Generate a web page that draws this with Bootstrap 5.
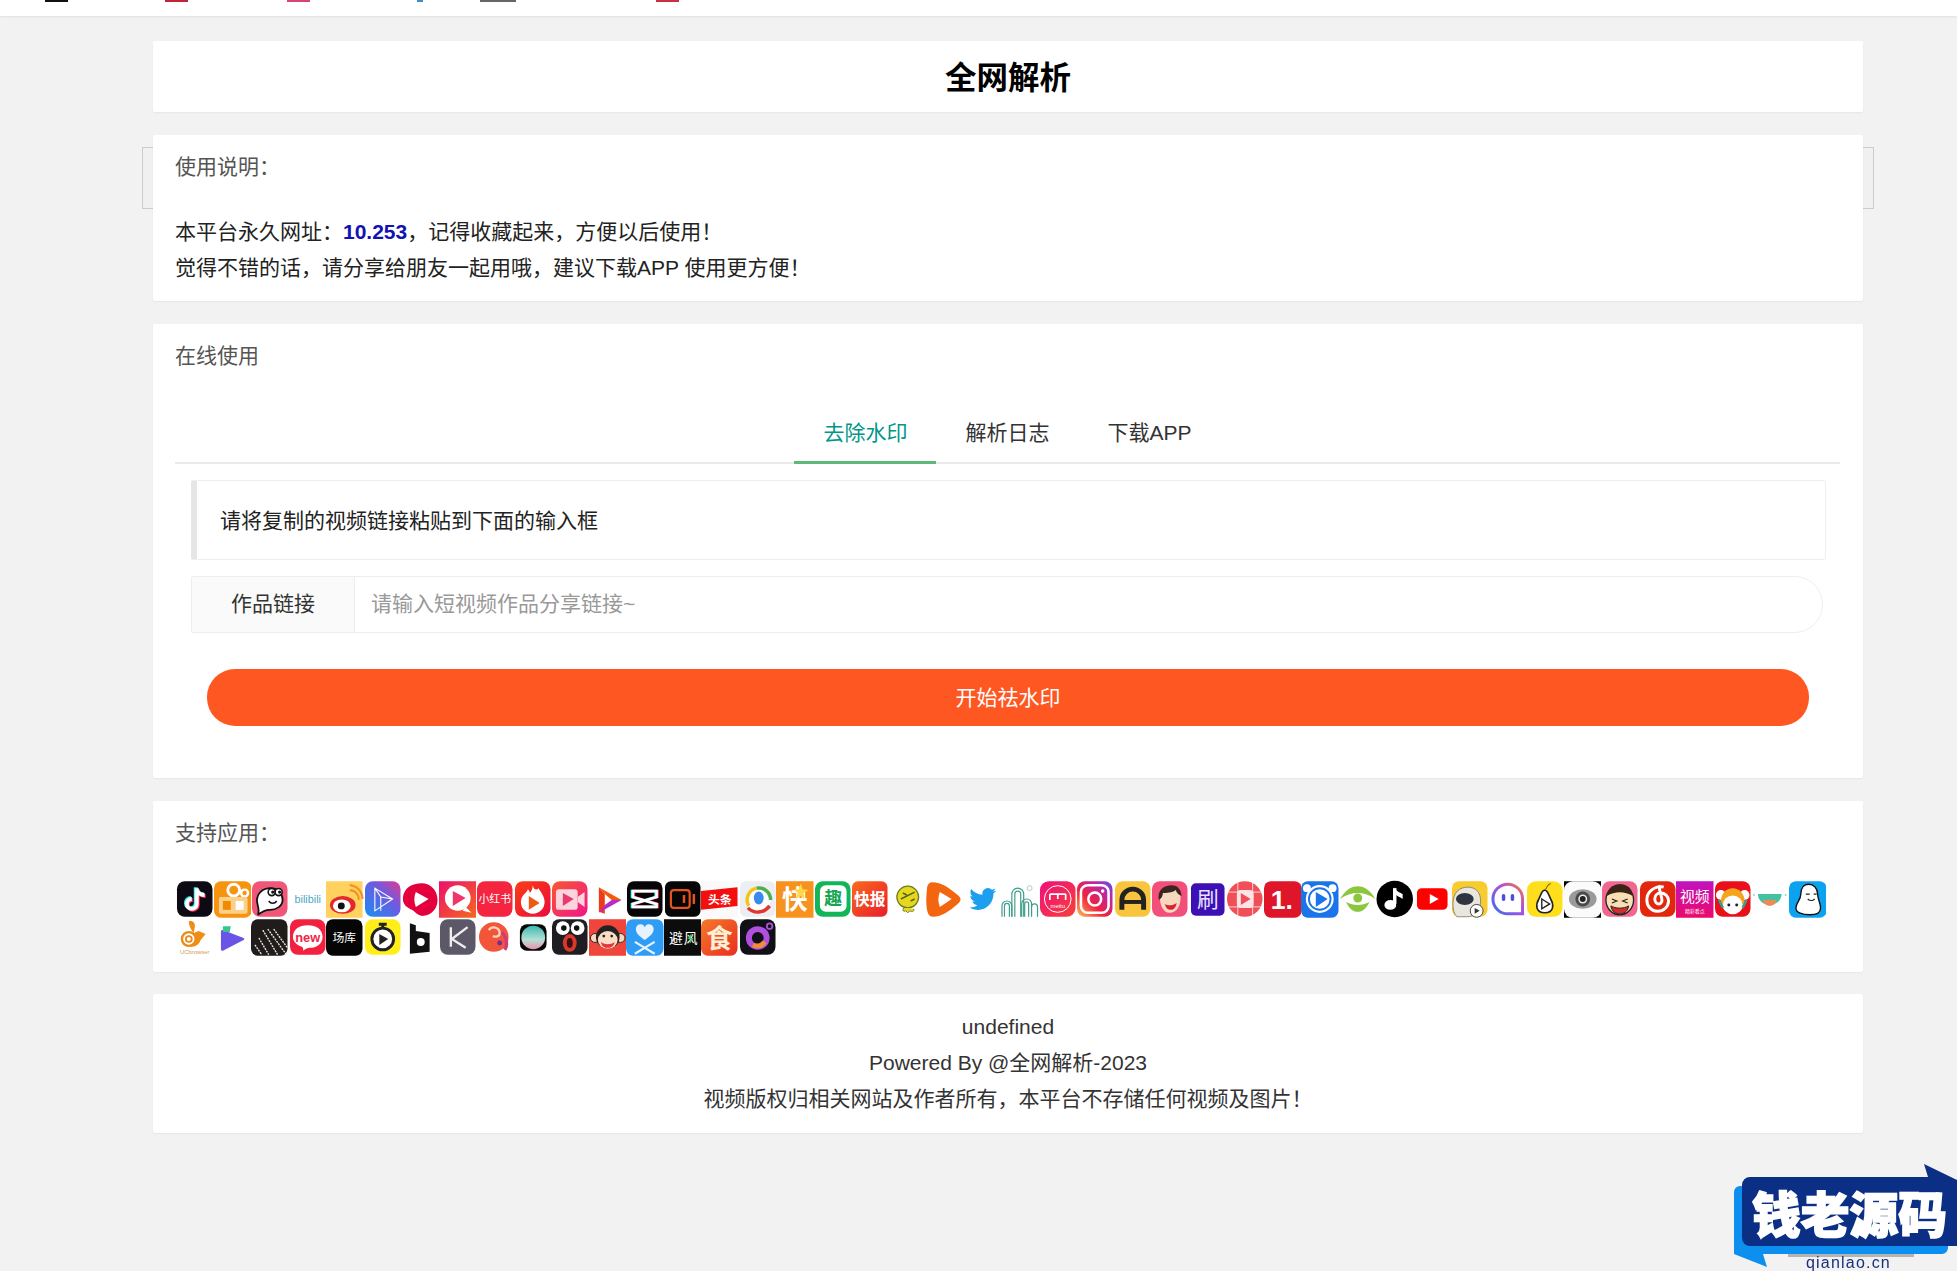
<!DOCTYPE html>
<html lang="zh-CN">
<head>
    <meta charset="UTF-8">
    <meta name="viewport" content="width=device-width, initial-scale=1.0">
    <title>全网解析</title>
    <link href="https://cdn.jsdelivr.net/npm/bootstrap@5.3.3/dist/css/bootstrap.min.css" rel="stylesheet">
    <style>
        body {
            background: #f2f2f2;
            color: #333;
            font-family: "Liberation Sans", "Noto Sans CJK SC", sans-serif;
            font-size: 21px;
            line-height: 36px;
        }
        .top-strip { height: 16px; background: #fff; box-shadow: 0 1px 2px rgba(0,0,0,.08); }
        .top-bit { height: 2px; width: 23px; }
        .bit-a { margin-left: 45px; background: #111; }
        .bit-b { margin-left: 97px; background: #c3233a; }
        .bit-c { margin-left: 99px; background: #d8447a; }
        .bit-d { margin-left: 107px; width: 6px; background: #3d8fd0; }
        .bit-e { margin-left: 57px; width: 36px; background: #666; }
        .bit-f { margin-left: 140px; background: #c8323f; }
        .page-wrap { width: 1710px; margin: 25px 0 0 153px; }
        .sheet { background: #fff; border: 0; border-radius: 2px; box-shadow: 0 1px 2px rgba(0,0,0,.05); margin-bottom: 23px; }
        .sheet-title { height: 71px; line-height: 75px; font-size: 31.5px; font-weight: 700; color: #000; text-align: center; }
        .sheet-head { height: 62px; line-height: 64px; padding: 0 22px; color: #555; }
        .sheet-body { padding: 17px 22px 15px; color: #222; }
        .ghost-box { position: absolute; left: -11px; right: -11px; top: 12px; height: 62px; background: #f0f0f0; border: 1px solid #ccc; z-index: 0; }
        .over-ghost { position: relative; z-index: 1; }
        .site-num { color: #1212b4; font-weight: 700; }
        .tab-area { padding: 16px 23px 0 22px; }
        .tab-row { border-bottom: 2px solid #eaeaea; height: 62px; }
        .tab-row .nav-link { color: #333; padding: 0 29px; height: 62px; line-height: 62px; font-size: 21px; border: 0; border-radius: 0; }
        .tab-row .nav-link.active { color: #009688; border-bottom: 3px solid #5fb878; }
        .tip-box { height: 80px; line-height: 80px; margin: 16px 14px 16px 16px; padding-left: 23px; border: 1px solid #eee; border-left: 6px solid #e6e6e6; border-radius: 2px; color: #222; }
        .link-group { margin: 0 0 36px 16px; width: 1632px; height: 57px; }
        .link-group .input-group-text { width: 164px; justify-content: center; background: #fafafa; border: 1px solid #eee; border-radius: 2px 0 0 2px; color: #333; font-size: 21px; padding-bottom: 8px; }
        .link-group .form-control { border: 1px solid #eee; border-radius: 0 29px 29px 0 !important; padding: 0 0 2px 16px; font-size: 21px; color: #333; box-shadow: none; }
        .link-group .form-control::placeholder { color: #999; }
        .go-btn { display: block; margin: 0 0 52px 32px; width: 1602px; height: 57px; border: 0; border-radius: 28px; background: #ff5722; color: #fff; font-size: 21px; line-height: 57px; padding: 0; }
        .go-btn:hover { background: #ff5722; color: #fff; }
        .app-grid { margin-top: 17px; padding: 0 22px 16px 23px; }
        .app-ico { width: 37.5px; height: 38px; flex: none; }
        .app-ico text { font-family: "Noto Sans CJK SC", "Liberation Sans", sans-serif; text-anchor: middle; }
        .foot-sheet { padding: 15px 0 16px; text-align: center; color: #333; margin-top: -1px; }
        .corner-mark { width: 257px; height: 131px; }
        .corner-mark text { font-family: "Noto Sans CJK SC", "Liberation Sans", sans-serif; }
    </style>
</head>
<body>
    <div class="top-strip d-flex">
        <div class="top-bit bit-a"></div><div class="top-bit bit-b"></div><div class="top-bit bit-c"></div>
        <div class="top-bit bit-d"></div><div class="top-bit bit-e"></div><div class="top-bit bit-f"></div>
    </div>

    <div class="page-wrap">
        <div class="card sheet sheet-title">全网解析</div>

        <div class="position-relative">
            <div class="ghost-box"></div>
            <div class="card sheet over-ghost">
                <div class="sheet-head">使用说明：</div>
                <div class="sheet-body">
                    本平台永久网址：<span class="site-num">10.253</span>，记得收藏起来，方便以后使用！<br>
                    觉得不错的话，请分享给朋友一起用哦，建议下载APP 使用更方便！
                </div>
            </div>
        </div>

        <div class="card sheet">
            <div class="sheet-head">在线使用</div>
            <div class="tab-area">
                <ul class="nav nav-tabs tab-row justify-content-center">
                    <li class="nav-item"><a class="nav-link active" href="#">去除水印</a></li>
                    <li class="nav-item"><a class="nav-link" href="#">解析日志</a></li>
                    <li class="nav-item"><a class="nav-link" href="#">下载APP</a></li>
                </ul>
                <div class="tip-box">请将复制的视频链接粘贴到下面的输入框</div>
                <div class="input-group link-group">
                    <span class="input-group-text">作品链接</span>
                    <input type="text" class="form-control" placeholder="请输入短视频作品分享链接~">
                </div>
                <button type="button" class="btn go-btn">开始祛水印</button>
            </div>
        </div>

        <div class="card sheet">
            <div class="sheet-head">支持应用：</div>
            <div class="app-grid d-flex flex-wrap">
                <!-- tiktok -->
                <svg class="app-ico" viewBox="0 0 38 38"><rect x="1" y="1" width="36" height="36" rx="8" fill="#0d0a14"/><g fill="none" stroke-width="4"><path d="M21 8v16a5 5 0 1 1-5-5M21 9c1 4 4 6 8 6" stroke="#25f4ee" transform="translate(-1 -1)"/><path d="M21 8v16a5 5 0 1 1-5-5M21 9c1 4 4 6 8 6" stroke="#fe2c55" transform="translate(1 1)"/><path d="M21 8v16a5 5 0 1 1-5-5M21 9c1 4 4 6 8 6" stroke="#fff"/></g></svg>
                <!-- orange camera -->
                <svg class="app-ico" viewBox="0 0 38 38"><rect x="0" y="1" width="38" height="37" rx="7" fill="#f7940f"/><circle cx="20" cy="10" r="6" fill="none" stroke="#fff" stroke-width="3"/><circle cx="31" cy="13" r="3.500" fill="none" stroke="#fff" stroke-width="2.500"/><rect x="5" y="17" width="29" height="17" rx="2" fill="#fbd08a"/><rect x="9" y="21" width="8" height="9" fill="#f28a00"/><rect x="22" y="21" width="8" height="9" fill="#fff"/></svg>
                <!-- pink bubble -->
                <svg class="app-ico" viewBox="0 0 38 38"><rect x="1" y="1" width="36" height="36" rx="8" fill="#ef5678"/><path d="M6 21c0-8 6-13 14-13s12 6 12 12-6 10-13 10c-3 0-7 1-12 5 2-4 0-7-1-14z" fill="#fff" stroke="#111" stroke-width="1.800"/><circle cx="21" cy="12" r="3.600" fill="#fff" stroke="#111" stroke-width="1.600"/><circle cx="28" cy="12" r="3.600" fill="#fff" stroke="#111" stroke-width="1.600"/><circle cx="22" cy="12" r="1.600" fill="#111"/><circle cx="29" cy="12" r="1.600" fill="#111"/><path d="M18 21c2 3 6 3 8 0" fill="none" stroke="#111" stroke-width="1.500"/></svg>
                <!-- bilibili -->
                <svg class="app-ico" viewBox="0 0 38 38"><text x="19" y="23" font-size="11" fill="#4fa8bf" style="font-family:'Liberation Sans'">bilibili</text></svg>
                <!-- weibo -->
                <svg class="app-ico" viewBox="0 0 38 38"><rect width="37" height="37" y="1" fill="#ffd25f"/><ellipse cx="17" cy="25" rx="13" ry="9" fill="#e6282d"/><ellipse cx="16" cy="26" rx="9" ry="6.500" fill="#fff"/><circle cx="15.500" cy="26" r="3.500" fill="#111"/><path d="M24 10a9 9 0 0 1 9 10M24 5a14 14 0 0 1 13 14" fill="none" stroke="#f29327" stroke-width="2.200"/></svg>
                <!-- blue purple play -->
                <svg class="app-ico" viewBox="0 0 38 38"><defs><linearGradient id="g6" x1="0" y1="1" x2="1" y2="0"><stop offset="0" stop-color="#1590f5"/><stop offset=".6" stop-color="#6f5ae0"/><stop offset="1" stop-color="#e23a8f"/></linearGradient></defs><rect x="1" y="1" width="36" height="36" rx="8" fill="url(#g6)"/><path d="M11 8l18 11-18 12zM11 8l6 9v14M17 17l12 2" fill="none" stroke="#fff" stroke-width="1.100"/></svg>
                <!-- red blob -->
                <svg class="app-ico" viewBox="0 0 38 38"><path d="M2 17C3 8 11 3 21 3c9 0 16 7 16 17 0 9-6 15-14 16-6 1-8-4-12-6-4-2-10-5-9-13z" fill="#e4003c"/><path d="M15 12l13 7-13 8c-2-5-2-10 0-15z" fill="#fff"/></svg>
                <!-- pink orange Q -->
                <svg class="app-ico" viewBox="0 0 38 38"><defs><linearGradient id="g8" x1="0" y1="0" x2="1" y2="1"><stop offset="0" stop-color="#ee0f6d"/><stop offset="1" stop-color="#f36a1d"/></linearGradient></defs><rect y="1" width="38" height="37" fill="url(#g8)"/><circle cx="19" cy="18" r="13" fill="#fff"/><path d="M27 27l6 6-9-2z" fill="#fff"/><path d="M14 11l13 7-13 8z" fill="#f0356c"/></svg>
                <!-- xiaohongshu -->
                <svg class="app-ico" viewBox="0 0 38 38"><rect x="1" y="1" width="36" height="36" rx="8" fill="#f5243f"/><text x="19" y="23" font-size="11" fill="#fff">小红书</text></svg>
                <!-- flame -->
                <svg class="app-ico" viewBox="0 0 38 38"><defs><linearGradient id="g10" x1="0" y1="0" x2="1" y2="1"><stop offset="0" stop-color="#fb3e14"/><stop offset="1" stop-color="#ec0b3b"/></linearGradient></defs><rect x="1" y="1" width="36" height="36" rx="8" fill="url(#g10)"/><path d="M19 5c1 5 4 5 6 3 1 3 6 7 6 14a12 12 0 0 1-24 0c0-7 6-9 7-13 1 1 2 2 2 4 2-2 3-5 3-8z" fill="#fff"/><path d="M15 16l11 7-11 7z" fill="#ef5a10"/></svg>
                <!-- pink camera -->
                <svg class="app-ico" viewBox="0 0 38 38"><defs><linearGradient id="g11" x1="0" y1="0" x2="1" y2="1"><stop offset="0" stop-color="#f9572f"/><stop offset="1" stop-color="#f0168a"/></linearGradient></defs><rect x="1" y="1" width="36" height="36" rx="8" fill="url(#g11)"/><rect x="5" y="9" width="22" height="21" rx="3" fill="#fbd4dd"/><path d="M27 17l7-5v15l-7-5z" fill="#fbd4dd"/><path d="M12 13l11 6-11 7z" fill="#e83a6c"/></svg>
                <!-- triangle play -->
                <svg class="app-ico" viewBox="0 0 38 38"><path d="M10 7l23 13-10 0-7-6z" fill="#f5580d"/><path d="M10 7l6 7 0 20-6-2z" fill="#ef3a18"/><path d="M33 20l-23 13 6-8 7-5z" fill="#b62bc8"/></svg>
                <!-- capcut -->
                <svg class="app-ico" viewBox="0 0 38 38"><rect x="1" y="1" width="36" height="36" rx="7" fill="#060608"/><g fill="none" stroke-width="2.600"><path d="M7 11h24v6L7 24v3h24v-3L7 17z" stroke="#25f4ee" transform="translate(-1 0)"/><path d="M7 11h24v6L7 24v3h24v-3L7 17z" stroke="#fe2c55" transform="translate(1 0)"/><path d="M7 11h24v6L7 24v3h24v-3L7 17z" stroke="#fff"/></g></svg>
                <!-- black camera -->
                <svg class="app-ico" viewBox="0 0 38 38"><rect x="1" y="1" width="36" height="36" rx="6" fill="#060606"/><rect x="7" y="10" width="19" height="18" rx="3" fill="none" stroke="#e8521f" stroke-width="2.200"/><rect x="19" y="15" width="2.500" height="8" fill="#e8521f"/><rect x="29" y="14" width="2.500" height="10" fill="#e8521f"/></svg>
                <!-- toutiao -->
                <svg class="app-ico" viewBox="0 0 38 38"><rect y="1" width="38" height="37" fill="#fafafa"/><path d="M0 12l37-4v19l-37 4z" fill="#f40e0e" transform="translate(0 -1)"/><text x="19" y="24" font-size="12" font-weight="700" fill="#fff">头条</text></svg>
                <!-- tencent news -->
                <svg class="app-ico" viewBox="0 0 38 38"><rect x="1" y="1" width="36" height="36" rx="6" fill="#eceef2"/><circle cx="20" cy="20" r="12" fill="#fff"/><path d="M10 26a12 12 0 0 1 8-18" fill="none" stroke="#f5c21b" stroke-width="3.500"/><path d="M18 8a12 12 0 0 1 14 12" fill="none" stroke="#4caf50" stroke-width="3.500"/><path d="M9 28c6 6 16 6 22-2" fill="none" stroke="#e2352d" stroke-width="3.500"/><ellipse cx="20" cy="18" rx="5" ry="6.500" fill="#3b8bea"/></svg>
                <!-- kuai orange -->
                <svg class="app-ico" viewBox="0 0 38 38"><rect y="1" width="38" height="37" fill="#f8921e"/><text x="19" y="29" font-size="26" font-weight="700" fill="#fff">快</text><path d="M25 3l2 6 6 1-5 3 1 6-4-3-5 3 2-6-4-4h5z" fill="#ffd84a"/></svg>
                <!-- qu green -->
                <svg class="app-ico" viewBox="0 0 38 38"><rect x="1" y="1" width="36" height="36" rx="8" fill="#12b558"/><rect x="6" y="5" width="27" height="27" rx="6" fill="#fff"/><text x="19.500" y="25" font-size="18" font-weight="700" fill="#12a552">趣</text></svg>
                <!-- kuaibao -->
                <svg class="app-ico" viewBox="0 0 38 38"><defs><linearGradient id="g19" x1="0" y1="0" x2="1" y2="1"><stop offset="0" stop-color="#f96a1e"/><stop offset="1" stop-color="#ea1c2c"/></linearGradient></defs><rect x="1" y="1" width="36" height="36" rx="6" fill="url(#g19)"/><text x="19" y="25" font-size="16" font-weight="700" fill="#fff">快报</text></svg>
                <!-- yellow bird -->
                <svg class="app-ico" viewBox="0 0 38 38"><circle cx="19" cy="17" r="11" fill="#e7d81f" stroke="#6e7d1c" stroke-width="1.300"/><path d="M12 19l14-7M14 13l4 2M22 21l4-2" stroke="#55651a" stroke-width="1.600"/><path d="M15 28c-2 3 0 4 2 3l2 2 2-2c2 1 5 1 4-2" fill="#e7d81f" stroke="#6e7d1c"/></svg>
                <!-- orange play -->
                <svg class="app-ico" viewBox="0 0 38 38"><path d="M6 2c10 0 18 6 26 13 4 3 4 6 0 9-8 7-16 13-25 13-4 0-5-3-6-7-1-7-1-13 0-21 0-4 2-7 5-7z" fill="#f3650e"/><path d="M14 12l12 7-12 8c-2-5-2-10 0-15z" fill="#fff"/></svg>
                <!-- twitter -->
                <svg class="app-ico" viewBox="-3 -5 30 34"><path fill="#1d9ff0" d="M23.953 4.57a10 10 0 01-2.825.775 4.958 4.958 0 002.163-2.723c-.951.555-2.005.959-3.127 1.184a4.92 4.92 0 00-8.384 4.482C7.69 8.095 4.067 6.13 1.64 3.162a4.822 4.822 0 00-.666 2.475c0 1.71.87 3.213 2.188 4.096a4.904 4.904 0 01-2.228-.616v.06a4.923 4.923 0 003.946 4.827 4.996 4.996 0 01-2.212.085 4.936 4.936 0 004.604 3.417 9.867 9.867 0 01-6.102 2.105c-.39 0-.779-.023-1.17-.067a13.995 13.995 0 007.557 2.209c9.053 0 13.998-7.496 13.998-13.985 0-.21 0-.42-.015-.63A9.935 9.935 0 0024 4.59z"/></svg>
                <!-- arches -->
                <svg class="app-ico" viewBox="0 0 38 38"><g fill="none" stroke="#3f9d8c" stroke-width="1.200"><path d="M1 37V26a5 5 0 0 1 10 0v11M3.500 37V26a2.500 2.500 0 0 1 5 0v11"/><path d="M11 37V14a6 6 0 0 1 12 0v23M14 37V14a3 3 0 0 1 6 0v23"/><path d="M21 37V24a5 5 0 0 1 10 0v13M24 37V24a2 2 0 0 1 4 0v13M31 37V27a3 3 0 0 1 6 0v10"/></g><circle cx="29" cy="8" r="2.500" fill="none" stroke="#b7c9c4"/></svg>
                <!-- meitu -->
                <svg class="app-ico" viewBox="0 0 38 38"><defs><linearGradient id="g24" x1="0" y1="0" x2="1" y2="1"><stop offset="0" stop-color="#f00f7a"/><stop offset="1" stop-color="#f6403a"/></linearGradient></defs><rect x="1" y="1" width="36" height="36" rx="9" fill="url(#g24)"/><circle cx="19" cy="19" r="13.500" fill="none" stroke="#fff" stroke-width="1"/><path d="M11 14h16M11 14v6M19 14v5M27 14v6" fill="none" stroke="#fff" stroke-width="1.700"/><text x="19" y="28" font-size="6" fill="#fff" style="font-family:'Liberation Sans'">meitu</text></svg>
                <!-- instagram -->
                <svg class="app-ico" viewBox="0 0 38 38"><defs><linearGradient id="g25" x1="0" y1="1" x2="1" y2="0"><stop offset="0" stop-color="#fec053"/><stop offset=".4" stop-color="#f2203e"/><stop offset=".75" stop-color="#b729a8"/><stop offset="1" stop-color="#5b4fe9"/></linearGradient></defs><rect x="1" y="1" width="36" height="36" rx="8" fill="url(#g25)"/><rect x="5" y="5" width="28" height="28" rx="7" fill="none" stroke="#fff" stroke-width="2.600"/><circle cx="19" cy="19" r="6.500" fill="none" stroke="#fff" stroke-width="2.600"/><circle cx="27" cy="11" r="1.800" fill="#fff"/></svg>
                <!-- yellow A -->
                <svg class="app-ico" viewBox="0 0 38 38"><rect x="1" y="1" width="36" height="36" rx="8" fill="#f9c53d"/><path d="M8 30V20a11 11 0 0 1 22 0v10" fill="none" stroke="#222" stroke-width="5"/><path d="M8 22h22" stroke="#222" stroke-width="4"/></svg>
                <!-- man face -->
                <svg class="app-ico" viewBox="0 0 38 38"><rect x="1" y="1" width="36" height="36" rx="8" fill="#f24f7b"/><path d="M9 17c0-7 5-11 11-10 6 0 10 4 10 10 0 9-4 16-11 16S9 25 9 17z" fill="#f7d8bf"/><path d="M8 20C6 10 13 5 21 5c6 0 10 5 10 11-3-1-5-3-6-6-3 3-10 3-13 3 0 3-1 5-4 7z" fill="#3a2620"/><path d="M14 24c3 2 8 2 12-1-1 5-3 7-6 7s-5-2-6-6z" fill="#d8232e"/></svg>
                <!-- shua -->
                <svg class="app-ico" viewBox="0 0 38 38"><rect x="2" y="3" width="34" height="33" rx="5" fill="#3c10b5"/><text x="19" y="27" font-size="22" fill="#e9e3ff">刷</text></svg>
                <!-- grid play -->
                <svg class="app-ico" viewBox="0 0 38 38"><circle cx="19" cy="19" r="18" fill="#f04f58"/><path d="M1 12h36M1 27h36M12 1v36M27 1v36" stroke="#fff" stroke-width="1" opacity=".75"/><rect x="11" y="10" width="17" height="18" rx="4" fill="#fde5e5"/><path d="M15 13l10 6-10 6z" fill="#f04f58"/></svg>
                <!-- one -->
                <svg class="app-ico" viewBox="0 0 38 38"><rect x="0" y="1" width="38" height="37" rx="7" fill="#df1529"/><text x="18" y="29" font-size="27" font-weight="700" fill="#fff" style="font-family:'Liberation Sans'">1.</text></svg>
                <!-- blue bear -->
                <svg class="app-ico" viewBox="0 0 38 38"><rect x="0" y="1" width="38" height="37" rx="7" fill="#1a75ea"/><circle cx="6" cy="8" r="4" fill="#fff"/><circle cx="32" cy="8" r="4" fill="#fff"/><circle cx="19" cy="19" r="13" fill="#1a75ea" stroke="#fff" stroke-width="2.200"/><circle cx="19" cy="19" r="10" fill="#fff"/><path d="M15 12l12 7-12 8z" fill="#1a75ea"/></svg>
                <!-- green eye -->
                <svg class="app-ico" viewBox="0 0 38 38"><path d="M1 19C7 9 13 6 19 6s12 3 18 13c-6-4-12-6-18-6S7 15 1 19z" fill="#8cc63f"/><path d="M7 22c3 6 7 10 12 10s9-4 12-10c-4 2-8 3-12 3S11 24 7 22z" fill="#8cc63f"/><circle cx="19" cy="18" r="4.500" fill="#8cc63f"/></svg>
                <!-- music -->
                <svg class="app-ico" viewBox="0 0 38 38"><circle cx="19" cy="19" r="18.500" fill="#000"/><path d="M19 8v16" stroke="#fff" stroke-width="3.500"/><ellipse cx="14.500" cy="25" rx="6" ry="5" fill="#fff"/><path d="M19 7c1 4 5 5 8 7v5c-3-2-6-3-8-5z" fill="#fff"/></svg>
                <!-- youtube -->
                <svg class="app-ico" viewBox="0 0 38 38"><rect x="3" y="8" width="31" height="22" rx="5" fill="#f00"/><path d="M16 14l9 5-9 5z" fill="#fff"/></svg>
                <!-- panda cow -->
                <svg class="app-ico" viewBox="0 0 38 38"><rect x="1" y="1" width="36" height="36" rx="7" fill="#f8cb2e"/><path d="M2 24C2 12 9 7 17 7s13 5 13 14c0 10-6 16-14 16H6c-3-3-4-7-4-13z" fill="#e9e6df" stroke="#777" stroke-width=".8"/><ellipse cx="14" cy="19" rx="9" ry="6" fill="#2f3540"/><circle cx="26" cy="31" r="6.500" fill="#fff" stroke="#444"/><path d="M24 28l5 3-5 3z" fill="#333"/></svg>
                <!-- chat gradient -->
                <svg class="app-ico" viewBox="0 0 38 38"><defs><linearGradient id="g36" x1="0" y1="1" x2="1" y2="0"><stop offset="0" stop-color="#3a6cf0"/><stop offset=".6" stop-color="#b04fe0"/><stop offset="1" stop-color="#f77a3c"/></linearGradient></defs><path d="M34 34H19A15 15 0 1 1 34 19z" fill="none" stroke="url(#g36)" stroke-width="3"/><rect x="13" y="14" width="3.500" height="7" rx="1.700" fill="#4d4de0"/><rect x="22" y="14" width="3.500" height="7" rx="1.700" fill="#4d4de0"/></svg>
                <!-- pear -->
                <svg class="app-ico" viewBox="0 0 38 38"><rect x="1" y="1" width="36" height="36" rx="9" fill="#ffdf1b"/><path d="M19 10c3 0 4 5 6 9 3 5 4 14-6 14S10 24 13 19c2-4 3-9 6-9z" fill="#fff" stroke="#222" stroke-width="1.600"/><path d="M20 9c1-3 3-5 5-6" stroke="#8a6a10" stroke-width="1.300" fill="none"/><path d="M16 19l8 5-8 5z" fill="none" stroke="#222" stroke-width="1.400"/></svg>
                <!-- grey eye -->
                <svg class="app-ico" viewBox="0 0 38 38"><rect y="1" width="38" height="37" fill="#000"/><rect y="1" width="38" height="37" rx="9" fill="#fbfbfb"/><ellipse cx="19" cy="19" rx="14" ry="10" fill="#9a9a9a"/><circle cx="19" cy="19" r="7.500" fill="#4a4a4a"/><circle cx="19" cy="19" r="4.500" fill="#eee"/><circle cx="19" cy="19" r="3" fill="#222"/></svg>
                <!-- laughing -->
                <svg class="app-ico" viewBox="0 0 38 38"><rect x="1" y="1" width="36" height="36" rx="8" fill="#f2678f"/><ellipse cx="19" cy="20" rx="14" ry="15" fill="#f8dfb4" stroke="#222" stroke-width="1.300"/><path d="M6 16C7 7 13 4 20 4s12 5 12 12c-8-5-18-5-26 0z" fill="#3a2416"/><path d="M10 26c5 3 13 3 18 0-1 6-5 8-9 8s-8-2-9-8z" fill="#d52c2c" stroke="#222"/><path d="M11 19l5 2-5 2M27 19l-5 2 5 2" fill="none" stroke="#222" stroke-width="1.200"/></svg>
                <!-- netease -->
                <svg class="app-ico" viewBox="0 0 38 38"><rect x="1" y="1" width="36" height="36" rx="8" fill="#e2270c"/><path d="M22 6c-9 2-14 7-14 14a11 11 0 0 0 22 1c0-5-4-8-8-8s-6 3-6 6 2 5 4 5 4-2 3-6l-2-8c-1-3 1-4 4-3" fill="none" stroke="#fff" stroke-width="3"/></svg>
                <!-- shipin -->
                <svg class="app-ico" viewBox="0 0 38 38"><defs><linearGradient id="g41" x1="0" y1="0" x2="0" y2="1"><stop offset="0" stop-color="#c012c0"/><stop offset="1" stop-color="#ec0a6a"/></linearGradient></defs><rect y="1" width="38" height="37" fill="url(#g41)"/><text x="19" y="22" font-size="15" fill="#fff">视频</text><text x="19" y="33" font-size="5" fill="#fff">精彩看点</text></svg>
                <!-- anime girl -->
                <svg class="app-ico" viewBox="0 0 38 38"><rect x="1" y="1" width="36" height="36" rx="8" fill="#e9101c"/><circle cx="7" cy="15" r="5" fill="#fff"/><circle cx="31" cy="15" r="5" fill="#fff"/><ellipse cx="19" cy="21" rx="12" ry="13" fill="#f4a519"/><ellipse cx="19" cy="25" rx="10" ry="9.500" fill="#fff"/><circle cx="15" cy="25" r="1.500" fill="#222"/><circle cx="23" cy="25" r="1.500" fill="#222"/><path d="M5 20l4 8M33 20l-4 8" stroke="#2ea58d" stroke-width="2.400"/></svg>
                <!-- bowl -->
                <svg class="app-ico" viewBox="0 0 38 38"><path d="M7 14h24c0 6-5 11-12 11S7 20 7 14z" fill="#44c2a0"/><path d="M12 20h14c-1 4-4 6-7 6s-6-2-7-6z" fill="#ef8a58"/><circle cx="3" cy="15" r="1" fill="#8fd8c0"/><circle cx="35" cy="15" r="1" fill="#8fd8c0"/></svg>
                <!-- ghost -->
                <svg class="app-ico" viewBox="0 0 38 38"><rect x="0" y="1" width="38" height="37" rx="7" fill="#0ba3f0"/><path d="M12 14c0-6 3-10 8-10s9 4 9 10c0 5 3 9 3 14 0 5-4 7-11 7S7 33 7 28c0-5 5-8 5-14z" fill="#fff" stroke="#111" stroke-width="1.400"/><path d="M17 14h4M25 14h3M19 19c2 2 5 2 7 0" fill="none" stroke="#222" stroke-width="1.200"/></svg>

                <!-- uc -->
                <svg class="app-ico" viewBox="0 0 38 38"><circle cx="13" cy="21" r="7" fill="none" stroke="#e98b17" stroke-width="2.400"/><circle cx="13" cy="21" r="3" fill="none" stroke="#e98b17" stroke-width="1.800"/><path d="M13 3c4-1 7 2 6 6l-1 6 5-2 7 3-5 6c-2 5-5 7-11 7 4-4 7-8 5-13-3-3-6-8-6-13z" fill="#ed8e15"/><text x="19" y="36" font-size="6" fill="#d59a5a" style="font-family:'Liberation Sans'">UCbrowser</text></svg>
                <!-- purple play -->
                <svg class="app-ico" viewBox="0 0 38 38"><path d="M9 12l21 8c1 .5 1 1 0 2L9 33c-1 0-2 0-2-2V14c0-2 1-2 2-2z" fill="#6a54e8"/><path d="M9 8h8l-1 6H9z" fill="#37c78c"/></svg>
                <!-- stripes -->
                <svg class="app-ico" viewBox="0 0 38 38"><rect width="37" height="37" y="1" rx="7" fill="#1f1c1b"/><g stroke="#e9e6df" stroke-width="1.400" stroke-dasharray="2 1"><path d="M12 12l15 25M17 11l19 26M23 11l14 19M8 20l10 17M4 27l7 10"/></g></svg>
                <!-- new -->
                <svg class="app-ico" viewBox="0 0 38 38"><rect x="1" y="1" width="36" height="36" rx="8" fill="#f2213f"/><path d="M4 19C4 11 10 7 19 7s15 4 15 12c0 7-6 11-13 11-2 0-4 1-7 3 1-2 0-3-1-4-5-2-9-5-9-10z" fill="#fff"/><text x="19" y="24" font-size="13" font-weight="700" fill="#ee2545" style="font-family:'Liberation Sans'">new</text></svg>
                <!-- changku -->
                <svg class="app-ico" viewBox="0 0 38 38"><rect x="0" y="1" width="37" height="37" rx="7" fill="#050505"/><text x="18.500" y="24" font-size="12" fill="#fff">场库</text></svg>
                <!-- timer -->
                <svg class="app-ico" viewBox="0 0 38 38"><rect x="1" y="1" width="36" height="36" rx="8" fill="#ffee1a"/><circle cx="19" cy="21" r="11" fill="#fff" stroke="#222" stroke-width="3"/><path d="M15 6h8M19 6v4" stroke="#222" stroke-width="3"/><path d="M15.500 16l9 5-9 6z" fill="#222"/></svg>
                <!-- b shape -->
                <svg class="app-ico" viewBox="0 0 38 38"><path d="M9 5l6 2v6l14 2v19l-20 2z" fill="#111"/><circle cx="20" cy="24" r="4" fill="#fff"/></svg>
                <!-- K -->
                <svg class="app-ico" viewBox="0 0 38 38"><rect x="1" y="1" width="36" height="36" rx="8" fill="#5d5868"/><path d="M12 9v20M29 9L13 21l14 9" fill="none" stroke="#eee" stroke-width="2.400"/></svg>
                <!-- orange ball -->
                <svg class="app-ico" viewBox="0 0 38 38"><circle cx="18" cy="19" r="15" fill="#f2553a"/><path d="M13 12a6 6 0 0 1 11 3c0 4-4 4-7 3" fill="none" stroke="#fcd4b8" stroke-width="2.400"/><path d="M26 14c6 6 6 14 3 18" fill="none" stroke="#d23a80" stroke-width="3.400"/><circle cx="24" cy="25" r="2.500" fill="#7a2a9a"/></svg>
                <!-- teal round -->
                <svg class="app-ico" viewBox="0 0 38 38"><rect x="6" y="6" width="27" height="27" rx="7" fill="#070707"/><defs><linearGradient id="g46" x1="0" y1="0" x2="0" y2="1"><stop offset="0" stop-color="#3cb9b0"/><stop offset=".6" stop-color="#b5e0d6"/><stop offset="1" stop-color="#ea91a9"/></linearGradient></defs><circle cx="19.500" cy="19.500" r="12" fill="url(#g46)"/></svg>
                <!-- scream -->
                <svg class="app-ico" viewBox="0 0 38 38"><rect x="1" y="1" width="36" height="36" rx="7" fill="#1e1e22"/><circle cx="12" cy="10" r="7" fill="#fff"/><circle cx="27" cy="10" r="7" fill="#fff"/><circle cx="13" cy="10" r="2.800" fill="#111"/><circle cx="26" cy="10" r="2.800" fill="#111"/><ellipse cx="19" cy="25" rx="7" ry="9" fill="#d8382e"/><ellipse cx="19" cy="25" rx="3" ry="5" fill="#3c0f0f"/></svg>
                <!-- monkey -->
                <svg class="app-ico" viewBox="0 0 38 38"><rect y="1" width="38" height="37" fill="#f0453a"/><circle cx="6" cy="20" r="4.500" fill="#fbd6bf" stroke="#222"/><circle cx="32" cy="20" r="4.500" fill="#fbd6bf" stroke="#222"/><ellipse cx="19" cy="19" rx="12" ry="12" fill="#222"/><ellipse cx="19" cy="22" rx="10" ry="9" fill="#fbdcc5"/><path d="M12 24c4 3 10 3 14 0-1 5-4 6-7 6s-6-1-7-6z" fill="#e8333a"/><circle cx="15" cy="18" r="1.400" fill="#222"/><circle cx="23" cy="18" r="1.400" fill="#222"/></svg>
                <!-- blue heart -->
                <svg class="app-ico" viewBox="0 0 38 38"><rect x="0" y="1" width="38" height="37" rx="7" fill="#2f9df5"/><path d="M19 22c-6-4-9-7-9-11 0-3 2-5 5-5 2 0 3 1 4 3 1-2 2-3 4-3 3 0 5 2 5 5 0 4-3 7-9 11z" fill="#e6f3ff"/><path d="M9 24l20 12M29 24L9 36" stroke="#e6f3ff" stroke-width="2.200"/></svg>
                <!-- bifeng -->
                <svg class="app-ico" viewBox="0 0 38 38"><rect y="1" width="38" height="37" fill="#0c0c0c"/><text x="12" y="25" font-size="14" fill="#fff">避</text><text x="27" y="25" font-size="14" fill="#fff">风</text><path d="M28 15l-4 6h3l-1 5 4-6h-3z" fill="#36d05a"/></svg>
                <!-- shi -->
                <svg class="app-ico" viewBox="0 0 38 38"><defs><linearGradient id="g50" x1="0" y1="0" x2="1" y2="1"><stop offset="0" stop-color="#f67a28"/><stop offset="1" stop-color="#ea2c22"/></linearGradient></defs><rect x="0" y="1" width="37" height="37" rx="7" fill="url(#g50)"/><text x="18.500" y="30" font-size="27" font-weight="700" fill="#fdeed6">食</text></svg>
                <!-- purple ring -->
                <svg class="app-ico" viewBox="0 0 38 38"><rect x="1" y="1" width="36" height="36" rx="8" fill="#111016"/><circle cx="19" cy="20" r="9" fill="none" stroke="#b04fe0" stroke-width="6"/><circle cx="31" cy="8" r="2.800" fill="none" stroke="#b04fe0" stroke-width="1.800"/><path d="M14 27a9 9 0 0 0 12-3" fill="none" stroke="#f08a3c" stroke-width="5"/></svg>
            </div>
        </div>

        <div class="card sheet foot-sheet">
            <div>undefined</div>
            <div>Powered By @全网解析-2023</div>
            <div>视频版权归相关网站及作者所有，本平台不存储任何视频及图片！</div>
        </div>
    </div>

    <svg class="corner-mark position-fixed bottom-0 end-0" viewBox="0 0 257 131">
        <rect x="88" y="112" width="126" height="5" fill="#8a8a8a" opacity=".6"/>
        <path d="M40 46h208v62a6 6 0 0 1-6 6H63l4 13-33-13V52a6 6 0 0 1 6-6z" fill="#0d8ff0"/>
        <path d="M224 24l33 16v66H50a8 8 0 0 1-8-8V45a8 8 0 0 1 8-8h178z" fill="#0a2f85"/>
        <text x="52" y="93" font-size="49" font-weight="900" fill="#fff" stroke="#fff" stroke-width="1.600" textLength="195" lengthAdjust="spacingAndGlyphs">钱老源码</text>
        <text x="106" y="128" font-size="16" fill="#1a2f80" letter-spacing="1.200" style="font-family:'Liberation Sans'">qianlao.cn</text>
    </svg>

    <script src="https://cdn.jsdelivr.net/npm/bootstrap@5.3.3/dist/js/bootstrap.bundle.min.js"></script>
</body>
</html>
